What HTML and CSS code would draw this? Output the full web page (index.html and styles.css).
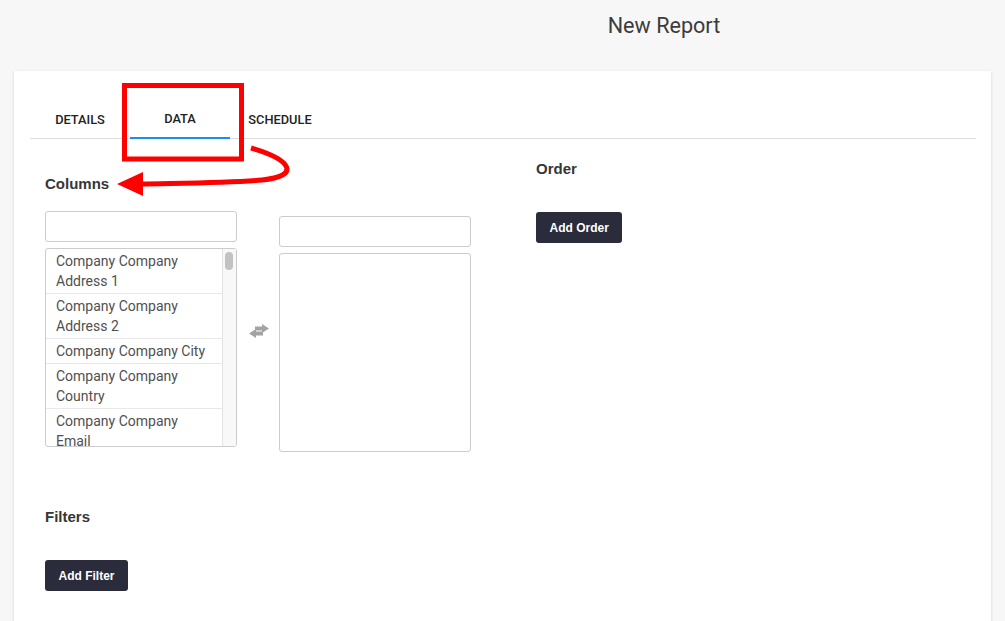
FILE: index.html
```html
<!DOCTYPE html>
<html lang="en">
<head>
<meta charset="utf-8">
<title>New Report</title>
<link rel="stylesheet" href="styles.css">
</head>
<body>
<header class="page-header">
  <h1 class="page-title">New Report</h1>
</header>
<main class="card">
  <nav class="tabs">
    <a class="tab">Details</a>
    <a class="tab tab--active">Data</a>
    <a class="tab">Schedule</a>
  </nav>
  <div class="data-grid">
    <section class="columns-section">
      <h2 class="section-title columns-title">Columns</h2>
      <div class="dual-list">
        <div class="list-col">
          <input class="list-search" type="text">
          <div class="listbox">
            <ul class="options">
              <li class="option">Company Company Address 1</li>
              <li class="option">Company Company Address 2</li>
              <li class="option">Company Company City</li>
              <li class="option">Company Company Country</li>
              <li class="option">Company Company Email</li>
            </ul>
            <div class="scrollbar"><div class="scroll-thumb"></div></div>
          </div>
        </div>
        <div class="swap">
          <svg width="22" height="14" viewBox="0 0 22 14" aria-hidden="true">
            <path fill="#a3a3a3" d="M7 2.6h7V0l7 4.5-7 4.5V6.4H7z"/>
            <path fill="#a3a3a3" d="M15 7.6H8V5L1 9.5 8 14v-2.6h7z"/>
          </svg>
        </div>
        <div class="list-col list-col--right">
          <input class="list-search" type="text">
          <div class="listbox listbox--tall"></div>
        </div>
      </div>
      <h2 class="section-title filters-title">Filters</h2>
      <button class="btn" type="button">Add Filter</button>
    </section>
    <section class="order-section">
      <h2 class="section-title order-title">Order</h2>
      <button class="btn" type="button">Add Order</button>
    </section>
  </div>
</main>
<svg class="annotation" width="1005" height="621" viewBox="0 0 1005 621" aria-hidden="true">
  <rect x="124.5" y="85.5" width="117" height="73.5" fill="none" stroke="#ff0000" stroke-width="5"/>
  <path d="M251 148 C 292 160, 301 176, 262 180 C 230 183, 190 183, 140 184" fill="none" stroke="#ff0000" stroke-width="5"/>
  <polygon points="117,184 143,172 143,196" fill="#ff0000"/>
</svg>
</body>
</html>
```
FILE: styles.css
```css
* { box-sizing: border-box; }

html, body {
  margin: 0;
  padding: 0;
}

body {
  background: #f7f7f7;
  font-family: Roboto, "Liberation Sans", Arial, sans-serif;
  color: #333;
  width: 1005px;
  height: 621px;
  overflow: hidden;
  position: relative;
}

.page-header {
  height: 71px;
  padding-top: 12px;
  padding-left: 323px;
  text-align: center;
}

.page-title {
  margin: 0;
  font-family: Roboto, sans-serif;
  font-weight: 400;
  font-size: 21.6px;
  line-height: 28px;
  color: #3c3c3c;
}

.card {
  margin: 0 14px;
  width: 977px;
  min-height: 560px;
  background: #fff;
  box-shadow: 0 1px 3px rgba(0, 0, 0, 0.14);
  padding: 29px 15px 0 16px;
}

.tabs {
  display: flex;
  border-bottom: 1px solid #ddd;
}

.tab {
  width: 100px;
  height: 38px;
  line-height: 40px;
  text-align: center;
  font-family: Roboto, sans-serif;
  font-weight: 500;
  font-size: 12.8px;
  text-transform: uppercase;
  color: #222;
  margin-bottom: -1px;
}

.tab--active {
  border-bottom: 2px solid #1a8ff0;
  line-height: 38px;
  height: 39px;
}

.data-grid {
  display: grid;
  grid-template-columns: 491px 1fr;
  padding-left: 15px;
}

.section-title {
  margin: 0;
  font-family: "Liberation Sans", Arial, sans-serif;
  font-weight: 700;
  font-size: 15px;
  line-height: 20px;
  color: #363636;
}

.columns-title { margin-top: 35px; }
.order-title { margin-top: 20px; }
.filters-title { margin-top: 55px; }

.dual-list {
  display: flex;
  align-items: flex-start;
  margin-top: 17px;
}

.list-col {
  width: 192px;
  display: flex;
  flex-direction: column;
}

.list-col--right .list-search { margin-top: 5px; }
.list-col--right .listbox { margin-top: 6px; }

.list-search {
  display: block;
  width: 192px;
  height: 31px;
  border: 1px solid #ccc;
  border-radius: 3px;
  background: #fff;
  padding: 0 8px;
  margin: 0;
  font: inherit;
}

.listbox {
  margin-top: 6px;
  height: 199px;
  border: 1px solid #ccc;
  border-radius: 3px;
  background: #fff;
  display: flex;
  overflow: hidden;
}

.options {
  flex: 1;
  list-style: none;
  margin: 0;
  padding: 0;
  overflow: hidden;
}

.option {
  padding: 2px 10px 2px 10px;
  font-family: Roboto, sans-serif;
  font-size: 14px;
  line-height: 20px;
  color: #505050;
  border-bottom: 1px solid #e8e8e8;
}

.scrollbar {
  width: 14px;
  flex: none;
  background: #f8f8f8;
  border-left: 1px solid #e4e4e4;
  padding: 3px 0 0 2px;
}

.scroll-thumb {
  width: 8px;
  height: 18px;
  border-radius: 4px;
  background: #c2c2c2;
}

.swap {
  width: 42px;
  align-self: center;
  display: flex;
  justify-content: center;
}

.swap svg { display: block; margin-left: 1px; margin-top: -2px; }

.btn {
  display: block;
  margin-top: 33px;
  height: 31px;
  padding: 0 13.5px;
  border: 0;
  border-radius: 3px;
  background: #2a2b3b;
  color: #fff;
  font-family: "Liberation Sans", Arial, sans-serif;
  font-weight: 700;
  font-size: 12px;
}

.annotation {
  position: absolute;
  top: 0;
  left: 0;
  pointer-events: none;
}
```
